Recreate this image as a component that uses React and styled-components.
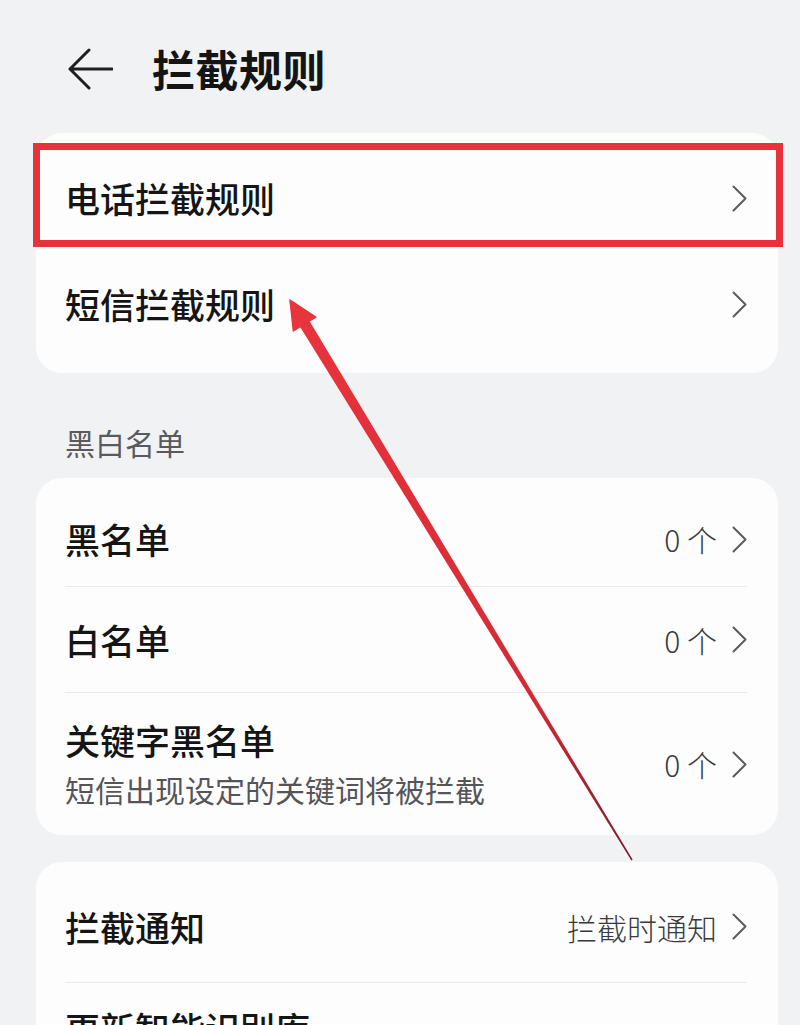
import React from "react";
import styled, { createGlobalStyle } from "styled-components";

const GlobalStyle = createGlobalStyle`
  html, body {
    margin: 0;
    padding: 0;
    background: #f1f2f4;
    overflow: hidden;
  }
  body {
    font-family: "Noto Sans CJK SC", "Noto Sans", sans-serif;
    color: #151515;
  }
  * { box-sizing: border-box; }
`;

const Page = styled.div`
  position: relative;
  width: 800px;
  height: 1025px;
  overflow: hidden;
  padding: 0 22px 0 36px;
  background: #f1f2f4;
`;

const Header = styled.header`
  height: 133px;
  display: flex;
  align-items: center;
  padding-left: 32px;
  padding-top: 4px;
  gap: 39px;
`;

const Title = styled.h1`
  margin: 0;
  font-size: 43px;
  font-weight: 700;
  letter-spacing: 0.5px;
  color: #141414;
  line-height: 1;
`;

const Card = styled.section`
  background: #fdfdfe;
  border-radius: 26px;
  padding: ${(p) => p.$pad || "0"};
`;

const Row = styled.div`
  position: relative;
  display: flex;
  align-items: ${(p) => (p.$alignTop ? "flex-start" : "center")};
  justify-content: space-between;
  height: ${(p) => p.$h}px;
  padding: ${(p) => (p.$alignTop ? "22px" : "0")} 31px 0 29px;

  ${(p) =>
    p.$highlight &&
    `
    &::after {
      content: "";
      position: absolute;
      top: -2px;
      bottom: 4px;
      left: -3px;
      right: -5px;
      border: 7px solid #e8323b;
      pointer-events: none;
    }
  `}
`;

const Divider = styled.div`
  height: 1px;
  margin: 0 31px 0 29px;
  background: #ebebee;
`;

const TextBlock = styled.div`
  display: flex;
  flex-direction: column;
  gap: 3px;
`;

const RowTitle = styled.div`
  font-size: 35px;
  font-weight: 500;
  line-height: 46px;
  color: #151515;
`;

const RowSub = styled.div`
  font-size: 30px;
  font-weight: 400;
  line-height: 46px;
  color: #555559;
`;

const Trail = styled.div`
  display: flex;
  align-items: center;
  gap: 15px;
`;

const Value = styled.span`
  font-size: 30px;
  font-weight: 300;
  color: #3a3a3c;
  line-height: 1;
  white-space: pre;
`;

const SectionLabel = styled.div`
  height: 105px;
  display: flex;
  align-items: center;
  padding: 33px 29px 0;
  font-size: 30px;
  font-weight: 400;
  color: #5a5a5e;
`;

const CardGap = styled.div`
  height: 27px;
`;

const Overlay = styled.svg`
  position: absolute;
  left: 0;
  top: 0;
  width: 800px;
  height: 1025px;
  pointer-events: none;
`;

const BackIcon = () => (
  <svg width="45" height="42" viewBox="0 0 45 42" fill="none">
    <path d="M21 2 L2 21 L21 40 M2 21 H44" stroke="#1f1f1f" strokeWidth="3" strokeLinecap="round" strokeLinejoin="round" />
  </svg>
);

const Chevron = () => (
  <svg width="15" height="27" viewBox="0 0 15 27" fill="none">
    <path d="M1.5 1.5 L13.5 13.5 L1.5 25.5" stroke="#5c5c60" strokeWidth="2" strokeLinecap="round" strokeLinejoin="round" />
  </svg>
);

const ListRow = ({ title, sub, value, h, highlight, alignTop }) => (
  <Row $h={h} $highlight={highlight} $alignTop={alignTop}>
    <TextBlock>
      <RowTitle>{title}</RowTitle>
      {sub && <RowSub>{sub}</RowSub>}
    </TextBlock>
    {!alignTop && (
      <Trail>
        {value && <Value>{value}</Value>}
        <Chevron />
      </Trail>
    )}
  </Row>
);

export default function App() {
  return (
    <>
      <GlobalStyle />
      <Page>
        <Header>
          <BackIcon />
          <Title>拦截规则</Title>
        </Header>

        <Card $pad="12px 0 16px">
          <ListRow title="电话拦截规则" h={106} highlight />
          <ListRow title="短信拦截规则" h={106} />
        </Card>

        <SectionLabel>黑白名单</SectionLabel>

        <Card $pad="14px 0 0">
          <ListRow title="黑名单" value="0 个" h={94} />
          <Divider />
          <ListRow title="白名单" value="0 个" h={105} />
          <Divider />
          <ListRow title="关键字黑名单" sub="短信出现设定的关键词将被拦截" value="0 个" h={142} />
        </Card>

        <CardGap />

        <Card $pad="9px 0 0">
          <ListRow title="拦截通知" value="拦截时通知" h={111} />
          <Divider />
          <ListRow title="更新智能识别库" h={143} alignTop />
        </Card>

        <Overlay viewBox="0 0 800 1025">
          <defs>
            <linearGradient id="shaft" x1="305" y1="324" x2="632" y2="860" gradientUnits="userSpaceOnUse">
              <stop offset="0" stopColor="#e8343c" />
              <stop offset="0.7" stopColor="#d42a36" />
              <stop offset="1" stopColor="#7a1a2a" />
            </linearGradient>
          </defs>
          <polygon points="309.5,321 300,326.8 631.4,860.4 632.6,859.6" fill="url(#shaft)" />
          <polygon points="290,300 315.8,317.2 293.4,330.8" fill="#e8343c" stroke="#e8343c" strokeWidth="1.5" strokeLinejoin="round" />
        </Overlay>
      </Page>
    </>
  );
}
